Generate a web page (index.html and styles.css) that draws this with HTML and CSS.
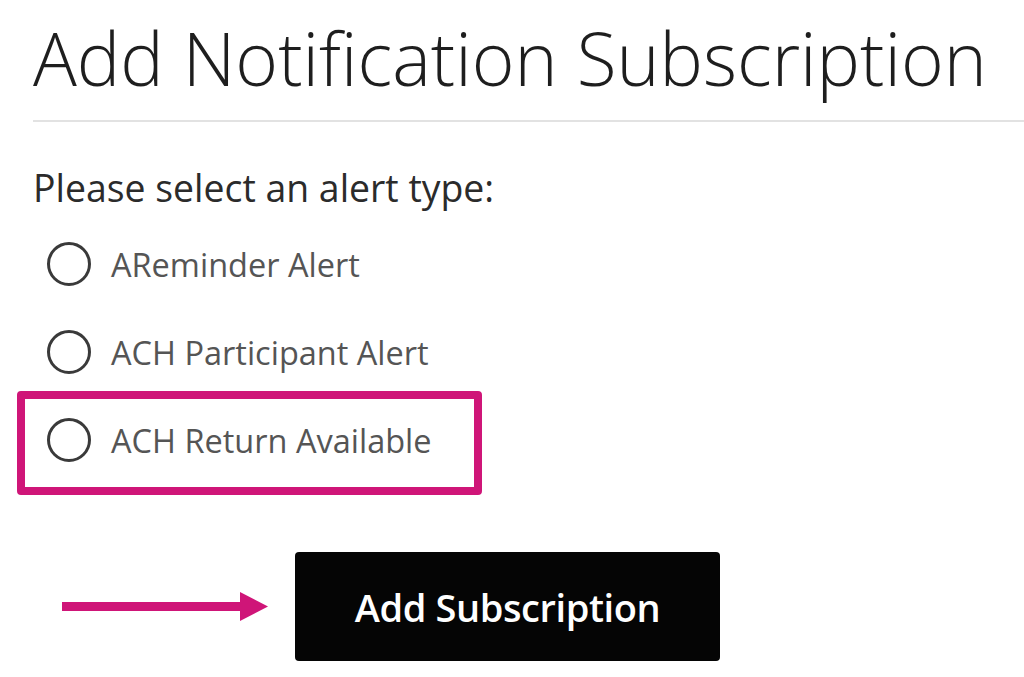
FILE: index.html
```html
<!DOCTYPE html>
<html lang="en">

<head>
    <meta charset="UTF-8">
    <title>Add Notification Subscription</title>
    <link rel="stylesheet" href="styles.css">
</head>

<body>
    <div class="page">
        <h1 class="title">Add Notification Subscription</h1>

        <form class="alert-form">
            <p class="question">Please select an alert type:</p>

            <label class="option">
                <input type="radio" name="alerttype" value="reminder">
                <span class="dot"></span>
                <span class="option-text">AReminder Alert</span>
            </label>

            <label class="option">
                <input type="radio" name="alerttype" value="participant">
                <span class="dot"></span>
                <span class="option-text">ACH Participant Alert</span>
            </label>

            <label class="option highlight">
                <input type="radio" name="alerttype" value="return">
                <span class="dot"></span>
                <span class="option-text">ACH Return Available</span>
            </label>

            <div class="actions">
                <svg class="arrow" width="206" height="30" viewBox="0 0 206 30">
                    <rect x="0" y="10" width="180" height="9" fill="#cf1578" />
                    <polygon points="178,0 206,14.5 178,29" fill="#cf1578" />
                </svg>
                <button type="button" class="submit">Add Subscription</button>
            </div>
        </form>
    </div>
</body>

</html>
```

FILE: styles.css
```css
html,
body {
    height: 100%;
}

body {
    margin: 0;
    background: #FFF;
    font-family: "Open Sans", "Liberation Sans", sans-serif;
    color: #222;
    overflow: hidden;
}

.page {
    padding-left: 33px;
}

.title {
    margin: 0;
    padding-top: 14px;
    padding-bottom: 18px;
    font-size: 73px;
    font-weight: 300;
    line-height: 88px;
    color: #1e1e1e;
    border-bottom: 2px solid #e2e2e2;
    white-space: nowrap;
}

.alert-form {
    display: flex;
    flex-direction: column;
}

.question {
    margin: 0;
    padding-top: 44px;
    padding-bottom: 10px;
    font-size: 37.4px;
    line-height: 44px;
    color: #2b2b2b;
}

.option {
    display: flex;
    align-items: center;
    gap: 20px;
    height: 88px;
    padding-left: 14px;
    cursor: pointer;
}

.option input {
    display: none;
}

.dot {
    width: 38px;
    height: 38px;
    border: 3px solid #3a3a3a;
    border-radius: 50%;
}

.option-text {
    font-size: 32.5px;
    color: #555;
}

.highlight {
    position: relative;
}

.highlight::after {
    content: "";
    position: absolute;
    left: -16px;
    top: -5px;
    width: 449px;
    height: 88px;
    border: 8px solid #cf1578;
    border-radius: 4px;
}

.actions {
    display: flex;
    align-items: center;
    gap: 27px;
    margin-top: 68px;
    padding-left: 29px;
}

.submit {
    width: 425px;
    height: 109px;
    background: #050505;
    border: none;
    border-radius: 4px;
    color: #FFF;
    font-family: "Open Sans", "Liberation Sans", sans-serif;
    font-size: 38px;
    font-weight: 600;
    letter-spacing: -0.4px;
}
```
